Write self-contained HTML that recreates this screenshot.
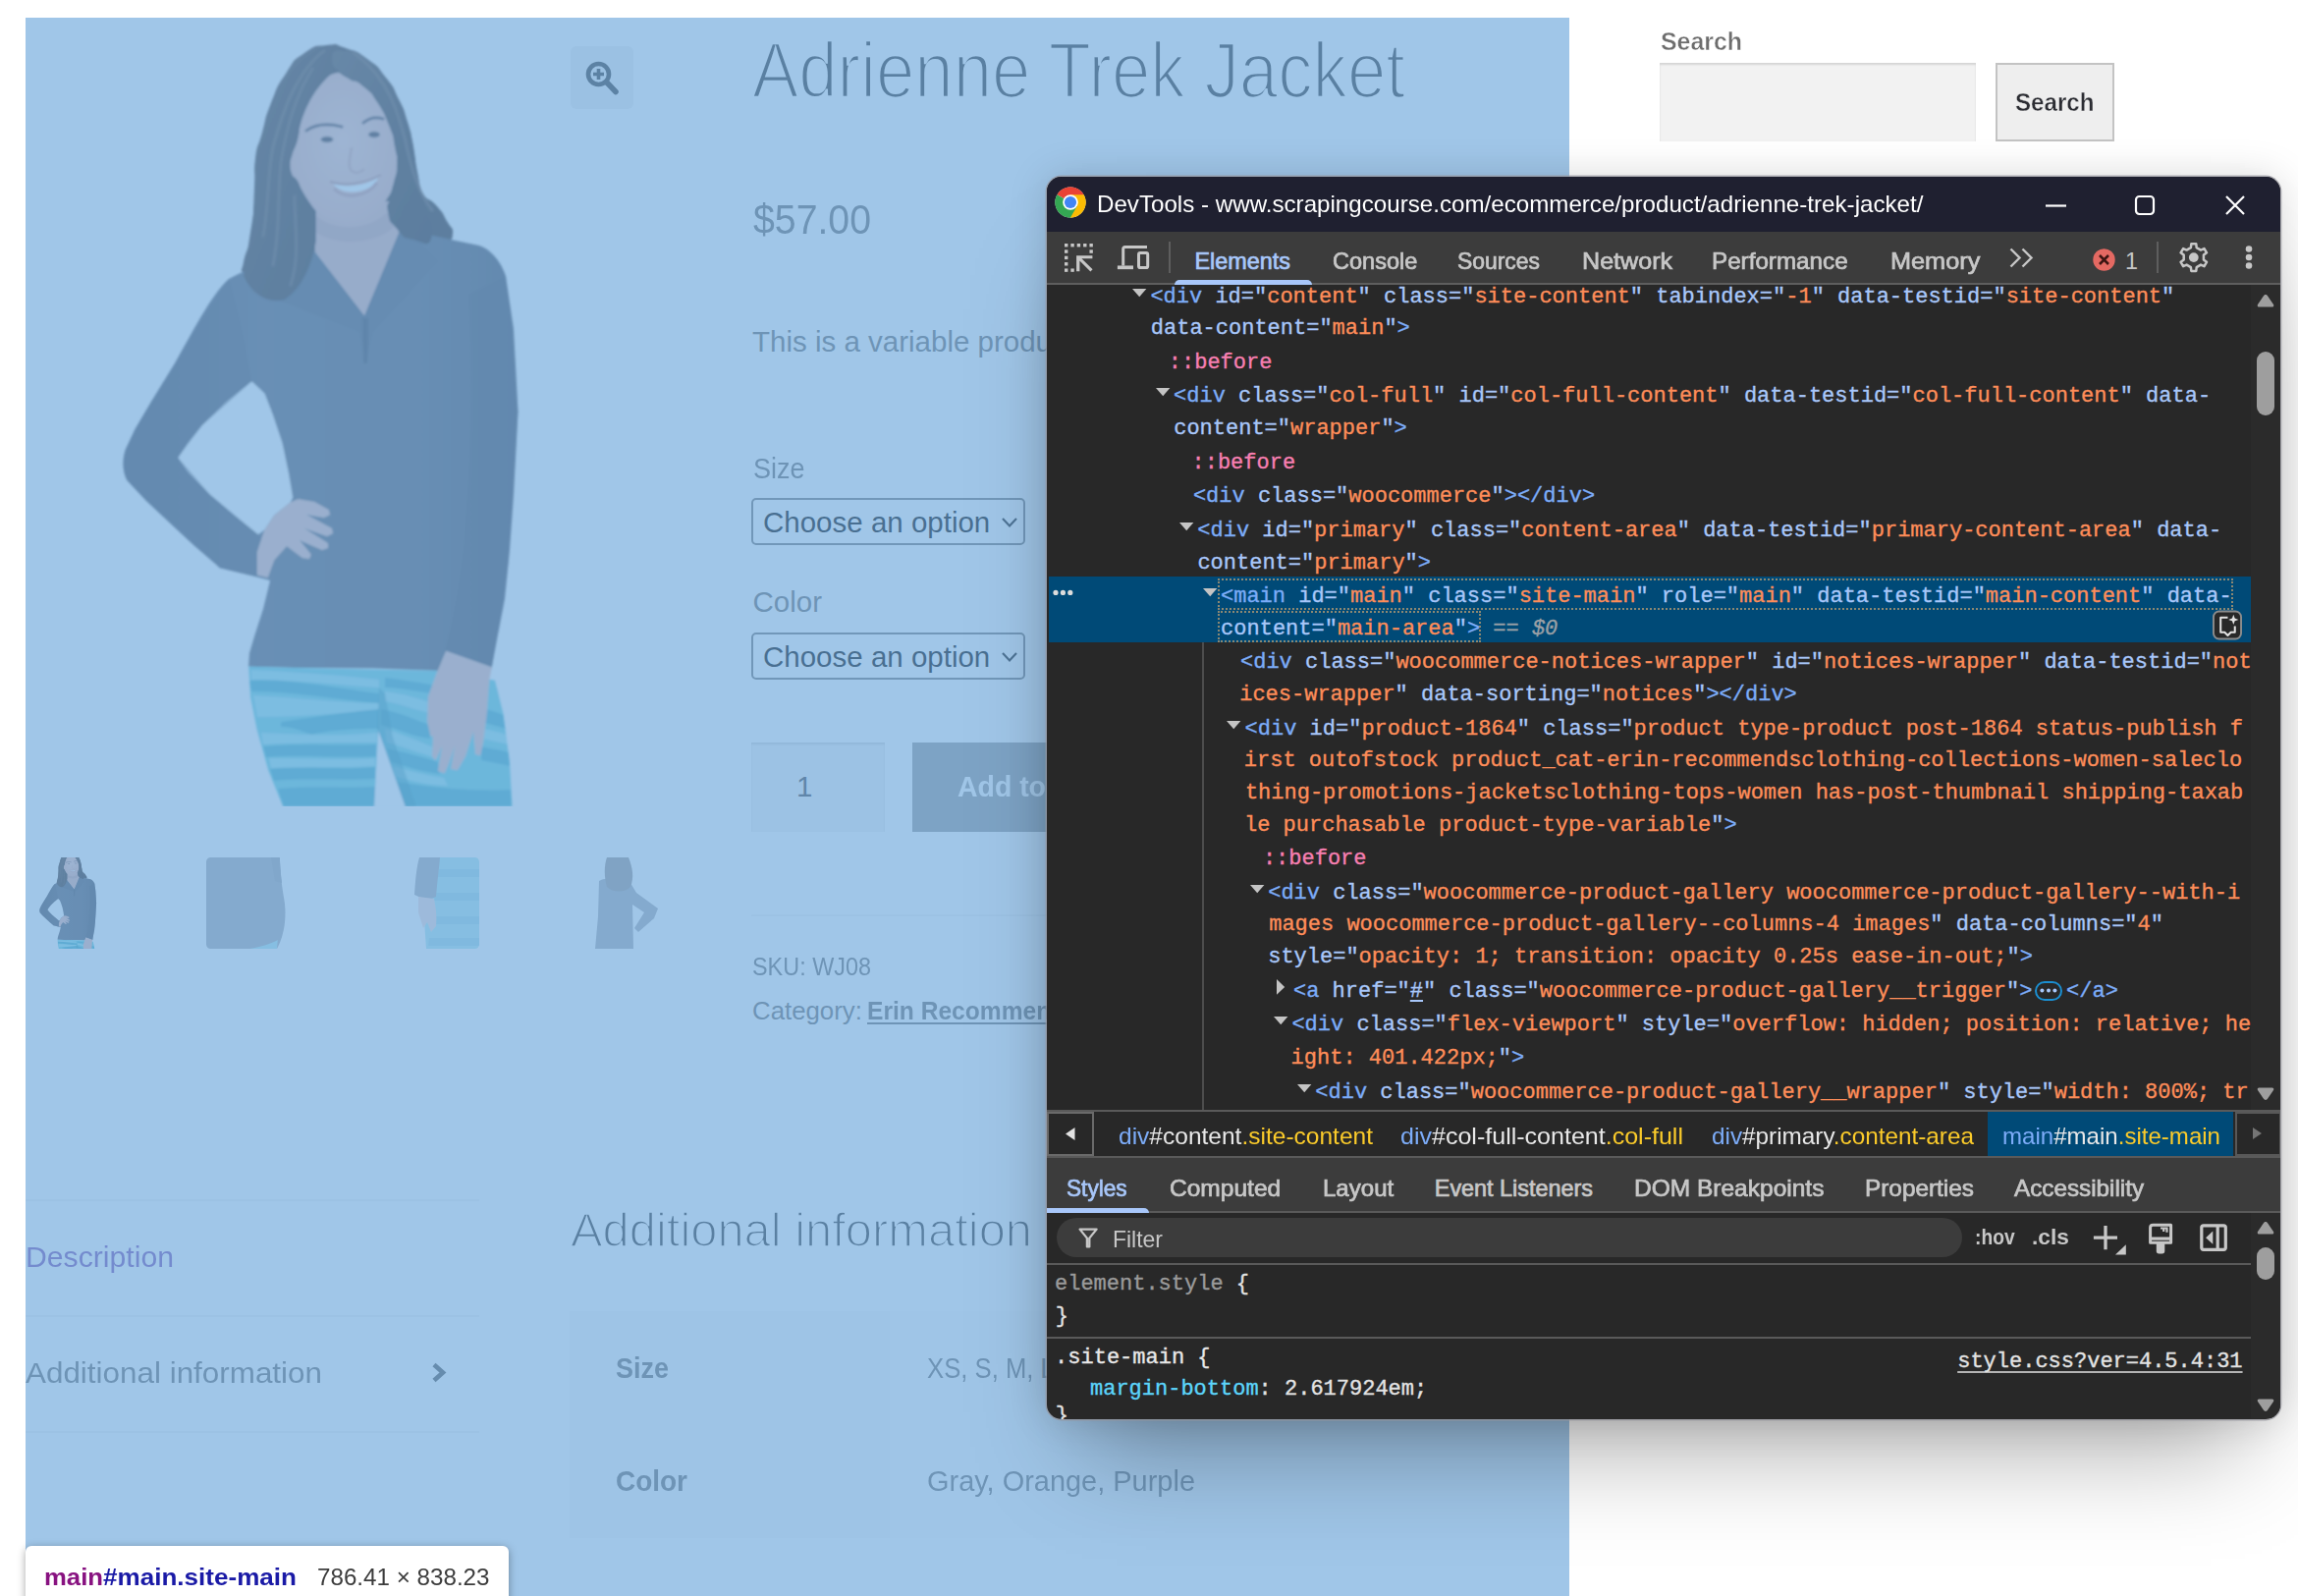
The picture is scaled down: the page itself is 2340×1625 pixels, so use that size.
<!DOCTYPE html>
<html lang="en"><head><meta charset="utf-8"><title>Adrienne Trek Jacket</title>
<style>
html,body{margin:0;padding:0}
body{width:2340px;height:1625px;position:relative;overflow:hidden;background:#fff;font-family:"Liberation Sans",Arial,sans-serif}
.t{position:absolute;white-space:pre;transform-origin:0 50%;display:block}
.a{position:absolute}
.m{position:absolute;white-space:pre;font:400 22px/30px "Liberation Mono",monospace;letter-spacing:-0.003px;-webkit-text-stroke:.35px}
.tg{color:#7cacf8}.an{color:#a8c7fa}.av{color:#fe8d59}.ps{color:#f77fb1}
svg{position:absolute;overflow:visible}
</style></head><body>
<div class="a" id="page" style="left:0;top:0;width:2340px;height:1625px"><svg style="left:26px;top:18px" width="647" height="803" viewBox="26 18 647 803"><defs><clipPath id="cpm"><rect x="26" y="18" width="647" height="803"/></clipPath></defs><g clip-path="url(#cpm)">
<g id="fig">
 <defs>
  <linearGradient id="gj" x1="0" y1="0" x2="1" y2="0"><stop offset="0" stop-color="#50515c"/><stop offset=".35" stop-color="#5e5f6a"/><stop offset=".75" stop-color="#5b5c67"/><stop offset="1" stop-color="#4d4e59"/></linearGradient>
  <linearGradient id="gh" x1="0" y1="0" x2="1" y2="1"><stop offset="0" stop-color="#5a4a44"/><stop offset=".5" stop-color="#453631"/><stop offset="1" stop-color="#372a28"/></linearGradient>
  <radialGradient id="gf" cx=".5" cy=".45" r=".6"><stop offset="0" stop-color="#f6cbc1"/><stop offset="1" stop-color="#e6b3a9"/></radialGradient>
  <filter id="soft" x="-5%" y="-5%" width="110%" height="110%"><feGaussianBlur stdDeviation="0.8"/></filter>
 </defs>
 <g filter="url(#soft)">
 <path d="M333.0,46.0 C319.0,47.7 324.0,44.3 310.0,54.0 C296.0,63.7 302.3,58.0 291.0,75.0 C279.7,92.0 284.0,85.0 276.0,105.0 C268.0,125.0 272.3,116.0 267.0,135.0 C261.7,154.0 262.3,143.7 260.0,162.0 C257.7,180.3 260.7,171.3 260.0,190.0 C259.3,208.7 259.3,201.3 258.0,218.0 C256.7,234.7 259.3,223.7 256.0,240.0 C252.7,256.3 250.7,253.3 248.0,267.0 C245.3,280.7 244.7,270.0 248.0,281.0 C251.3,292.0 249.3,291.0 258.0,300.0 C266.7,309.0 263.3,306.3 274.0,308.0 C284.7,309.7 279.7,310.3 290.0,305.0 C300.3,299.7 295.7,303.7 305.0,292.0 C314.3,280.3 312.3,285.7 318.0,270.0 C323.7,254.3 320.7,261.7 322.0,245.0 C323.3,228.3 296.0,230.0 322.0,220.0 C348.0,210.0 372.7,210.7 400.0,215.0 C427.3,219.3 397.3,223.3 404.0,233.0 C410.7,242.7 409.3,239.3 420.0,244.0 C430.7,248.7 425.0,246.3 436.0,247.0 C447.0,247.7 444.7,249.0 453.0,246.0 C461.3,243.0 460.3,245.0 461.0,238.0 C461.7,231.0 460.3,234.3 455.0,225.0 C449.7,215.7 453.7,220.0 445.0,210.0 C436.3,200.0 435.7,206.0 429.0,195.0 C422.3,184.0 427.7,192.0 425.0,177.0 C422.3,162.0 424.3,167.7 421.0,150.0 C417.7,132.3 420.0,140.3 415.0,124.0 C410.0,107.7 413.3,116.0 406.0,101.0 C398.7,86.0 403.7,92.7 393.0,79.0 C382.3,65.3 387.7,70.0 374.0,60.0 C360.3,50.0 365.7,53.7 352.0,49.0 C338.3,44.3 347.0,44.3 333.0,46.0 Z" fill="url(#gh)"/>
 <path d="M321.0,210.0 L321.0,256.0 L345.0,288.0 L370.5,320.0 L384.0,290.0 L406.0,237.0 L398.0,205.0 Z" fill="#e4b2a8"/>
 <path d="M300,262 C280,266 250,274 233,284 C215,300 195,340 178,370 L154,409 L137.5,437 L127.7,458 C124,470 125,480 129.3,489 L149,510 L173.3,532.7 L197.8,555.5 L220.6,575 L223.8,578.3 L271,589.7 L275,591.3 L268,620 L259,648 L254,665 L253,678.7 L300,680 L380,680.5 L447,683 L454.2,663 L500.7,679.6 L505.7,653 L514,609.8 L519,560 L523,504 L527.5,419 L523,335 L515,281 C510,266 500,254 488,250 L440,240 L406,226 L371,321 L319,254 Z" fill="url(#gj)"/>
 <path d="M256.4,388.5 L230.3,408.9 L205.9,433.3 L191.2,451.2 L181.5,465.9 L191.2,480.6 L214,503.4 L238.5,524.5 L262.9,544.1 L269.4,539.2 L279.2,524.5 L295.5,511.5 L298,506.6 L293.9,482.2 L287.4,451.2 L277.6,421.9 L269.4,400.7 Z" fill="#fff"/>
 <path d="M178,370 L154,409 L137.5,437 L127.7,458 C124,470 126,482 129.3,489 L149,510 L197.8,555.5 L223.8,578.3 L271,589.7 L272,560 L262.9,544.1 L214,503.4 L181.5,465.9 L205.9,433.3 L256.4,388.5 C250,350 240,310 233,284 Z" fill="#4d4e59" opacity=".5"/>
 <path d="M478,300 C484,400 482,560 452,667 L500.5,681.5 L517.5,574 L527.5,419 L515,281 Z" fill="#494a55" opacity=".5"/>
 <path d="M319,254 L371,321 L406,226 L414,232 L446,266 L380,338 L372,372 L366,338 L284,306 Z" fill="#52535e" opacity=".7"/>
 <path d="M321,215 L321,256 L371,321 L384,290 L406,237 L398,205 Z" fill="#e4b2a8"/>
 <path d="M322,220 C340,236 380,236 398,212 L400,232 C380,250 340,250 321,236 Z" fill="#c99a92" opacity=".6"/>
 <path d="M337.0,76.0 C324.7,80.0 327.7,78.7 318.0,92.0 C308.3,105.3 313.0,99.0 308.0,116.0 C303.0,133.0 307.0,128.3 303.0,143.0 C299.0,157.7 298.3,149.0 296.0,160.0 C293.7,171.0 293.7,168.0 296.0,176.0 C298.3,184.0 298.3,176.0 303.0,184.0 C307.7,192.0 303.7,190.0 310.0,200.0 C316.3,210.0 312.0,206.0 322.0,214.0 C332.0,222.0 326.7,220.0 340.0,224.0 C353.3,228.0 348.7,228.0 362.0,226.0 C375.3,224.0 369.7,225.3 380.0,218.0 C390.3,210.7 386.0,215.0 393.0,204.0 C400.0,193.0 397.3,198.0 401.0,185.0 C404.7,172.0 403.7,179.0 404.0,165.0 C404.3,151.0 405.3,158.0 402.0,143.0 C398.7,128.0 400.0,133.0 394.0,120.0 C388.0,107.0 391.3,114.0 384.0,104.0 C376.7,94.0 381.7,98.0 372.0,90.0 C362.3,82.0 366.7,84.7 355.0,80.0 C343.3,75.3 349.3,72.0 337.0,76.0 Z" fill="url(#gf)"/>
 <path d="M248,281 C256,300 274,310 290,305 C305,296 318,272 322,245 L322,215 C316,208 306,192 303,184 C296,180 294,168 297,160 C300,150 304,140 303,143 C306,118 318,92 337,76 C345,70 352,72 352,78 L352,49 L333,46 C310,54 291,75 276,105 L260,162 L258,218 Z" fill="url(#gh)"/>
 <path d="M352.0,78.0 C363.3,87.3 361.3,79.3 372.0,88.0 C382.7,96.7 376.0,90.7 384.0,104.0 C392.0,117.3 390.0,112.7 396.0,128.0 C402.0,143.3 399.3,135.0 402.0,150.0 C404.7,165.0 405.3,157.0 404.0,173.0 C402.7,189.0 401.0,183.7 398.0,198.0 C395.0,212.3 393.0,204.3 395.0,216.0 C397.0,227.7 395.7,223.7 404.0,233.0 C412.3,242.3 408.0,241.7 420.0,244.0 C432.0,246.3 436.7,254.7 440.0,240.0 C443.3,225.3 435.3,223.3 430.0,200.0 C424.7,176.7 428.7,193.3 424.0,170.0 C419.3,146.7 424.0,156.0 416.0,130.0 C408.0,104.0 413.3,114.0 400.0,92.0 C386.7,70.0 392.0,77.3 376.0,64.0 C360.0,50.7 364.7,53.3 352.0,52.0 C339.3,50.7 338.0,51.3 338.0,60.0 C338.0,68.7 340.7,68.7 352.0,78.0 Z" fill="url(#gh)"/>
 <g fill="none" stroke="#7a6458" stroke-width="3" opacity=".55" stroke-linecap="round">
  <path d="M330,52 C305,70 288,110 278,150 C272,180 274,210 268,240"/>
  <path d="M318,70 C300,100 292,130 286,165 C282,200 286,230 278,270"/>
  <path d="M360,54 C385,70 402,100 412,140 C418,170 426,196 440,214"/>
  <path d="M300,200 C300,230 306,260 296,290"/>
 </g>
 <path d="M339,187 C352,192 372,189 385,181 C380,196 350,201 339,187 Z" fill="#fff"/>
 <path d="M336,185 C350,190 372,187 388,178" stroke="#c58a84" stroke-width="2" fill="none"/>
 <path d="M340,192 C352,204 374,200 384,186" stroke="#d39a94" stroke-width="3.5" fill="none"/>
 <path d="M312,133 C322,126 336,126 348,129 M370,125 C377,119 384,119 390,121" stroke="#5a4448" stroke-width="3.2" fill="none" stroke-linecap="round"/>
 <ellipse cx="333" cy="142" rx="6.5" ry="3.2" fill="#4a3638"/><ellipse cx="381" cy="137" rx="6" ry="3.2" fill="#4a3638"/>
 <path d="M358,150 C356,162 354,170 358,174 C362,177 368,176 371,172" stroke="#d8a59c" stroke-width="2.5" fill="none"/>
 <path d="M253.3,678.7 L300,680 L447,683 L504,692.8 L512.3,726 L519,776 L521.5,821.2 L288.2,821.2 L273.2,784.2 L261.6,742.7 L255,709.5 Z" fill="#68d2da"/>
 <clipPath id="cpleg"><path d="M253.3,678.7 L300,680 L447,683 L504,692.8 L512.3,726 L519,776 L521.5,821.2 L288.2,821.2 L273.2,784.2 L261.6,742.7 L255,709.5 Z"/></clipPath>
 <g clip-path="url(#cpleg)">
 <g fill="#279cb6" opacity=".62">
  <path d="M254,693 C290,690 340,700 386,706 L386,716 C340,712 300,704 256,704 Z"/>
  <path d="M286,735 C320,730 360,724 386,722 L386,742 C360,742 330,744 318,748 C306,744 296,740 286,740 Z"/>
  <path d="M268,760 C300,756 350,760 383,758 L383,770 C350,772 300,768 271,771 Z"/>
  <path d="M275,783 C310,780 350,784 382,781 L382,793 C350,795 310,792 279,795 Z"/>
  <path d="M283,803 C320,800 350,803 382,801 L382,822 L289,822 Z"/>
  <path d="M392,690 C410,692 430,696 447,698 L447,706 C430,706 410,700 392,700 Z"/>
  <path d="M388,722 C410,726 425,734 438,738 L438,752 C420,750 405,742 388,738 Z"/>
  <path d="M394,762 C410,766 430,770 446,776 L448,788 C430,786 412,780 398,776 Z"/>
  <path d="M404,796 C430,800 470,806 520,804 L521,822 L412,822 Z"/>
  <path d="M494,722 C502,724 508,726 513,728 L515,742 C508,740 500,738 494,736 Z"/>
  <path d="M490,760 C500,762 510,764 518,766 L519,780 C510,778 500,776 490,774 Z"/>
 </g>
 <g fill="#c4f4fa" opacity=".5">
  <path d="M256,682 C300,684 350,688 386,692 L386,700 C350,698 300,692 256,692 Z"/>
  <path d="M258,708 C300,710 350,716 386,716 L386,722 C350,726 310,730 262,730 Z"/>
  <path d="M266,746 C300,748 350,750 384,746 L384,756 C350,756 300,756 268,758 Z"/>
  <path d="M274,772 C310,772 350,774 382,772 L382,780 C350,782 310,780 276,782 Z"/>
  <path d="M392,704 C410,706 430,712 440,716 L438,726 C420,722 405,716 392,714 Z"/>
  <path d="M392,742 C410,748 430,756 444,762 L446,772 C430,768 410,760 394,756 Z"/>
  <path d="M400,780 C420,786 440,790 452,792 L456,800 C440,800 420,796 402,790 Z"/>
  <path d="M492,742 C502,744 510,746 516,748 L517,758 C510,756 500,754 491,752 Z"/>
 </g>
 </g>
 <path d="M386,700 L384,744 L390,770 L412.7,821.2 L424,821.2 L400,750 L392,706 Z" fill="#2a8fa4" opacity=".45"/>
 <path d="M385.3,744.3 L381.2,821.5 L412.7,821.5 Z" fill="#fff"/>
 <path d="M454.2,663 L500.7,679.6 L498.2,692.8 L495.7,726 L492,756 L489.1,769.2 L484,768 L482,745 L474,770 L465.8,784.2 L459,783 L463,760 L456,780 L452.6,787.5 L446,785 L450,760 L443.4,774.2 L440,770 L441,750 L438.4,749.3 L435.1,734.4 L436,709.5 L444.3,686.2 Z" fill="#ecbdb3"/>
 <path d="M269.4,539.2 L279.2,524.5 L295.5,511.5 L303.7,508.3 L320,511 L334.6,519 L336,524 L330,527 L312,524 L337.9,538 L339,543 L333,546 L310,538 L333.8,553 L334,558 L328,560 L305,550 L316.7,564.5 L315,569 L308,568 L292,556 L279.2,570.2 L272.7,588 L262,585.5 L262,562 Z" fill="#ecbdb3"/>
 <path d="M369,324 L375,324 L374,370 L370,370 Z" fill="#42434d"/>
 </g>
</g></g></svg><div class="a" style="left:581px;top:47px;width:64px;height:64px;border-radius:6px;background:#f0f0f0"></div><svg style="left:596px;top:62px" width="34" height="36" viewBox="0 0 34 36"><circle cx="13.5" cy="13.5" r="10.5" fill="none" stroke="#3a3a3a" stroke-width="4.6"/><path d="M21.5,21.5 L31,31.5" stroke="#3a3a3a" stroke-width="5.6" stroke-linecap="round"/><path d="M8,13.5 H19 M13.5,8 V19" stroke="#3a3a3a" stroke-width="3.6"/></svg><svg style="left:26px;top:873px" width="93" height="93" viewBox="26 96 647 647"><defs><clipPath id="cpt1"><rect x="26" y="96" width="647" height="647"/></clipPath></defs><g clip-path="url(#cpt1)"><use href="#fig"/></g></svg><svg style="left:210px;top:873px;opacity:.5" width="93" height="93" viewBox="0 0 93 93">
<path d="M4.5,0 H74.8 C75.5,14 76.5,26 78.5,38 C80.5,48 81,56 80,66 C79,76 76,86 72,93 H4.5 C2,93 0,91 0,88.5 V4.5 C0,2 2,0 4.5,0 Z" fill="#5b5c67"/>
<path d="M66,0 H74.8 C75.3,10 76,18 77,26 L70,24 Z" fill="#494a55"/>
<path d="M44,93 C56,91 66,88 72.8,84 L72,93 Z" fill="#68d2da"/></svg><svg style="left:395px;top:873px;opacity:.5" width="93" height="93" viewBox="0 0 93 93">
<path d="M48,0 H88.5 C91,0 93,2 93,4.5 V88.5 C93,91 91,93 88.5,93 H39 L36,50 Z" fill="#68d2da"/>
<g fill="#279cb6" opacity=".5"><path d="M52,12 H93 V20 H50 Z M48,36 H93 V44 H47 Z M46,60 H93 V68 H44 Z M42,82 H93 V90 H41 Z"/></g>
<path d="M32,0 H53 C52,12 50,26 49,40 L40,44 L27,38 C28,24 29,10 32,0 Z" fill="#5b5c67"/>
<path d="M31,40 L47,42 C49,52 50,60 49,70 L44,76 L40,66 L36,72 L31,56 Z" fill="#ecbdb3"/></svg><svg style="left:580px;top:873px;opacity:.5" width="93" height="93" viewBox="0 0 93 93">
<path d="M30,24 C36,20 56,20 62,26 L68,36 L90,52 L86,62 L70,76 L66,72 L76,56 L64,48 L65,93 H26 L29,60 Z" fill="#5b5c67"/>
<path d="M38,0 H60 C64,10 66,20 62,30 C56,36 44,36 38,30 C35,20 35,8 38,0 Z" fill="#453631"/></svg><span class="t" style="transform:scaleX(0.8905);left:766.0px;top:20.2px;font:400 79.5px/103px 'Liberation Sans', Arial, sans-serif;color:#333;-webkit-text-stroke:2.7px #fff;">Adrienne Trek Jacket</span><span class="t" style="transform:scaleX(0.9341);left:767.0px;top:195.9px;font:400 42px/55px 'Liberation Sans', Arial, sans-serif;color:#6d6d6d;">$57.00</span><span class="t" style="left:766.0px;top:328.8px;font:400 29.5px/38px 'Liberation Sans', Arial, sans-serif;color:#6d6d6d;">This is a variable product called a Adrienne Trek Jacket</span><span class="t" style="transform:scaleX(0.9148);left:766.5px;top:457.5px;font:400 29.5px/38px 'Liberation Sans', Arial, sans-serif;color:#6d6d6d;">Size</span><span class="t" style="left:766.5px;top:593.8px;font:400 29.5px/38px 'Liberation Sans', Arial, sans-serif;color:#6d6d6d;">Color</span><div class="a" style="left:765px;top:507px;width:275px;height:43.5px;border:2px solid #767676;border-radius:5px;background:#fff"></div><span class="t" style="left:777.0px;top:512.6px;font:400 29.5px/38px 'Liberation Sans', Arial, sans-serif;color:#000;">Choose an option</span><svg style="left:1020px;top:526.5px" width="16" height="10" viewBox="0 0 16 10"><path d="M1,1 L8,8.4 L15,1" fill="none" stroke="#111" stroke-width="2.2"/></svg><div class="a" style="left:765px;top:644px;width:275px;height:43.5px;border:2px solid #767676;border-radius:5px;background:#fff"></div><span class="t" style="left:777.0px;top:649.6px;font:400 29.5px/38px 'Liberation Sans', Arial, sans-serif;color:#000;">Choose an option</span><svg style="left:1020px;top:663.5px" width="16" height="10" viewBox="0 0 16 10"><path d="M1,1 L8,8.4 L15,1" fill="none" stroke="#111" stroke-width="2.2"/></svg><div class="a" style="left:765px;top:756px;width:136px;height:91px;background:#f2f2f2;box-shadow:inset 0 2px 2px rgba(0,0,0,.12)"></div><span class="t" style="left:811.0px;top:782.2px;font:400 29.5px/38px 'Liberation Sans', Arial, sans-serif;color:#43454b;">1</span><div class="a" style="left:929px;top:756px;width:300px;height:91px;background:#999"></div><span class="t" style="transform:scaleX(0.9634);left:974.5px;top:782.2px;font:700 29.5px/38px 'Liberation Sans', Arial, sans-serif;color:#fff;">Add to cart</span><div class="a" style="left:765px;top:931px;width:834px;height:2px;background:rgba(0,0,0,.05)"></div><span class="t" style="transform:scaleX(0.9075);left:766.0px;top:967.1px;font:400 25.8px/34px 'Liberation Sans', Arial, sans-serif;color:#6d6d6d;">SKU: WJ08</span><span class="t" style="left:766.0px;top:1011.9px;font:400 25.8px/34px 'Liberation Sans', Arial, sans-serif;color:#6d6d6d;">Category: </span><span class="t" style="transform:scaleX(0.9536);left:883.0px;top:1011.9px;font:700 25.8px/34px 'Liberation Sans', Arial, sans-serif;color:#6d6d6d;text-decoration:underline;text-decoration-thickness:2px;text-underline-offset:3px;">Erin Recommends</span><div class="a" style="left:26px;top:1221px;width:462px;height:2px;background:rgba(0,0,0,.05)"></div><div class="a" style="left:26px;top:1339px;width:462px;height:2px;background:rgba(0,0,0,.05)"></div><div class="a" style="left:26px;top:1457px;width:462px;height:2px;background:rgba(0,0,0,.05)"></div><span class="t" style="transform:scaleX(1.0233);left:26.0px;top:1260.8px;font:400 29.5px/38px 'Liberation Sans', Arial, sans-serif;color:#7f54b3;">Description</span><span class="t" style="transform:scaleX(1.0645);left:26.0px;top:1378.8px;font:400 29.5px/38px 'Liberation Sans', Arial, sans-serif;color:#6d6d6d;">Additional information</span><svg style="left:439px;top:1387px" width="17" height="21" viewBox="0 0 17 21"><path d="M3,2.5 L12,10.5 L3,18.5" fill="none" stroke="#555" stroke-width="4.6"/></svg><span class="t" style="transform:scaleX(1.0077);left:581.0px;top:1220.9px;font:400 48.5px/63px 'Liberation Sans', Arial, sans-serif;color:#333;-webkit-text-stroke:1.7px #fff;">Additional information</span><div class="a" style="left:580px;top:1335px;width:326px;height:231px;background:#f8f8f8"></div><div class="a" style="left:906px;top:1335px;width:692px;height:231px;background:#fdfdfd"></div><span class="t" style="transform:scaleX(0.9148);left:627.0px;top:1373.8px;font:700 29.5px/38px 'Liberation Sans', Arial, sans-serif;color:#6d6d6d;">Size</span><span class="t" style="transform:scaleX(0.9477);left:627.0px;top:1488.8px;font:700 29.5px/38px 'Liberation Sans', Arial, sans-serif;color:#6d6d6d;">Color</span><span class="t" style="transform:scaleX(0.8706);left:943.5px;top:1373.8px;font:400 29.5px/38px 'Liberation Sans', Arial, sans-serif;color:#6d6d6d;">XS, S, M, </span><span class="t" style="left:1059.0px;top:1373.8px;font:400 29.5px/38px 'Liberation Sans', Arial, sans-serif;color:#6d6d6d;">L, XL</span><span class="t" style="transform:scaleX(0.9813);left:943.5px;top:1488.8px;font:400 29.5px/38px 'Liberation Sans', Arial, sans-serif;color:#6d6d6d;">Gray, Orange, Purple</span><span class="t" style="transform:scaleX(0.9569);left:1691.0px;top:25.2px;font:700 26px/34px 'Liberation Sans', Arial, sans-serif;color:#6d6d6d;-webkit-text-stroke:.4px #fff;">Search</span><div class="a" style="left:1690px;top:64px;width:322px;height:80px;background:#f2f2f2;box-shadow:inset 0 2px 2px rgba(0,0,0,.12)"></div><div class="a" style="left:2032px;top:64px;width:117px;height:76px;background:#eeeeee;border:2px solid #c3c3c3"></div><span class="t" style="transform:scaleX(0.9281);left:2052.0px;top:86.8px;font:700 26px/34px 'Liberation Sans', Arial, sans-serif;color:#2c2d33;-webkit-text-stroke:.4px #eee;">Search</span></div><div class="a" style="left:26px;top:18px;width:1572px;height:1607px;background:rgba(111,168,220,.66)"></div><div class="a" style="left:26px;top:1574px;width:492px;height:70px;background:#fff;border-radius:6px;box-shadow:0 2px 8px rgba(0,0,0,.35)"></div><span class="t" style="transform:scaleX(1.0894);left:44.5px;top:1590.6px;font:700 23.6px/31px 'Liberation Sans', Arial, sans-serif;color:#881280;">main</span><span class="t" style="transform:scaleX(1.1047);left:104.8px;top:1590.6px;font:700 23.6px/31px 'Liberation Sans', Arial, sans-serif;color:#1a1aa6;">#main.site-main</span><span class="t" style="transform:scaleX(1.0250);left:323.0px;top:1590.6px;font:400 23.6px/31px 'Liberation Sans', Arial, sans-serif;color:#3c3c3c;">786.41 × 838.23</span><div class="a" style="left:1066px;top:180px;width:1256px;height:1265px;border-radius:15px;background:#282828;box-shadow:0 0 0 1.4px rgba(150,150,158,.75),0 64px 100px -36px rgba(0,0,0,.34),0 0 40px rgba(0,0,0,.15)"></div><div class="a" style="left:1066px;top:180px;width:1256px;height:1265px;border-radius:15px;overflow:hidden"><div class="a" style="left:-1066px;top:-180px;width:2340px;height:1625px"><div class="a" style="left:1066px;top:180px;width:1256px;height:56px;background:#1f2030"></div><svg style="left:1073px;top:189px" width="34" height="34" viewBox="0 0 48 48">
<circle cx="24" cy="24" r="22" fill="#fff"/>
<path d="M24,24 L4.95,13 A22,22 0 0 1 43.05,13 Z" fill="#ea4335"/>
<path d="M24,24 L43.05,13 A22,22 0 0 1 24,46 Z" fill="#fbbc04"/>
<path d="M24,24 L24,46 A22,22 0 0 1 4.95,13 Z" fill="#34a853"/>
<path d="M24,13 H43.05 A22,22 0 0 0 4.95,13 Z" fill="#ea4335"/>
<path d="M33.5,29.5 L24,46 A22,22 0 0 0 43.05,13 H24 Z" fill="#fbbc04"/>
<path d="M14.5,29.5 L4.95,13 A22,22 0 0 0 24,46 L33.5,29.5 Z" fill="#34a853"/>
<circle cx="24" cy="24" r="11" fill="#fff"/><circle cx="24" cy="24" r="8.6" fill="#4285f4"/></svg><span class="t" style="transform:scaleX(1.0323);left:1117.0px;top:192.9px;font:400 23.4px/30px 'Liberation Sans', Arial, sans-serif;color:#fff;">DevTools - www.scrapingcourse.com/ecommerce/product/adrienne-trek-jacket/</span><svg style="left:2083px;top:208px" width="21" height="3" viewBox="0 0 21 3"><rect width="21" height="2.2" y=".4" fill="#fff"/></svg><svg style="left:2173px;top:198px" width="22" height="22" viewBox="0 0 22 22"><rect x="2" y="2" width="18" height="18" rx="3.5" fill="none" stroke="#fff" stroke-width="2.2"/></svg><svg style="left:2265px;top:198px" width="22" height="22" viewBox="0 0 22 22"><path d="M2,2 L20,20 M20,2 L2,20" stroke="#fff" stroke-width="2.2" fill="none"/></svg><div class="a" style="left:1066px;top:236px;width:1256px;height:52px;background:#3c3c3c"></div><div class="a" style="left:1066px;top:288px;width:1256px;height:2px;background:#5e5e5e"></div><svg style="left:1083.8px;top:247.9px" width="30" height="30" viewBox="0 0 30 30"><g fill="#c7c7c7"><rect x="0.00" y="0.00" width="3.4" height="3.4"/><rect x="6.36" y="0.00" width="3.4" height="3.4"/><rect x="12.72" y="0.00" width="3.4" height="3.4"/><rect x="19.08" y="0.00" width="3.4" height="3.4"/><rect x="25.44" y="0.00" width="3.4" height="3.4"/><rect x="0.00" y="6.36" width="3.4" height="3.4"/><rect x="0.00" y="12.72" width="3.4" height="3.4"/><rect x="0.00" y="19.08" width="3.4" height="3.4"/><rect x="0.00" y="25.44" width="3.4" height="3.4"/><rect x="25.44" y="6.36" width="3.4" height="3.4"/><rect x="6.36" y="25.44" width="3.4" height="3.4"/><path d="M12.1,12.2 H28.4 V15.3 H17.4 L28.6,26.2 L26.4,28.4 L15.4,17.6 V28.3 H12.1 Z"/></g></svg><svg style="left:1137px;top:249px" width="35" height="27" viewBox="0 0 35 27"><g fill="none" stroke="#c7c7c7"><path d="M6.7,21.6 V4.5 Q6.7,2.5 8.7,2.5 H31" stroke-width="3"/><path d="M0.9,23.3 H17" stroke-width="3.7"/><rect x="22.5" y="8.6" width="9.2" height="15" rx="1.6" stroke-width="3"/></g></svg><div class="a" style="left:1190px;top:246px;width:2px;height:32px;background:#5e5e5e"></div><span class="t" style="left:1216.5px;top:251.3px;font:400 23.4px/30px 'Liberation Sans', Arial, sans-serif;color:#a8c7fa;-webkit-text-stroke:.7px #a8c7fa;">Elements</span><span class="t" style="transform:scaleX(1.0055);left:1356.7px;top:251.3px;font:400 23.4px/30px 'Liberation Sans', Arial, sans-serif;color:#c7c7c7;-webkit-text-stroke:.7px #c7c7c7;">Console</span><span class="t" style="transform:scaleX(0.9789);left:1484.0px;top:251.3px;font:400 23.4px/30px 'Liberation Sans', Arial, sans-serif;color:#c7c7c7;-webkit-text-stroke:.7px #c7c7c7;">Sources</span><span class="t" style="transform:scaleX(1.0735);left:1610.5px;top:251.3px;font:400 23.4px/30px 'Liberation Sans', Arial, sans-serif;color:#c7c7c7;-webkit-text-stroke:.7px #c7c7c7;">Network</span><span class="t" style="transform:scaleX(1.0351);left:1743.4px;top:251.3px;font:400 23.4px/30px 'Liberation Sans', Arial, sans-serif;color:#c7c7c7;-webkit-text-stroke:.7px #c7c7c7;">Performance</span><span class="t" style="transform:scaleX(1.0807);left:1925.0px;top:251.3px;font:400 23.4px/30px 'Liberation Sans', Arial, sans-serif;color:#c7c7c7;-webkit-text-stroke:.7px #c7c7c7;">Memory</span><div class="a" style="left:1195.7px;top:285.2px;width:140.3px;height:5px;border-radius:5px 5px 0 0;background:#a8c7fa"></div><svg style="left:2046px;top:252px" width="26" height="21" viewBox="0 0 26 21"><path d="M1.5,1.5 L10.5,10.5 L1.5,19.5 M13.5,1.5 L22.5,10.5 L13.5,19.5" fill="none" stroke="#c7c7c7" stroke-width="2.4"/></svg><svg style="left:2131px;top:252.5px" width="23" height="23" viewBox="0 0 23 23"><circle cx="11.5" cy="11.5" r="11.2" fill="#e46962"/><path d="M7,7 L16,16 M16,7 L7,16" stroke="#3c1512" stroke-width="2.6"/></svg><span class="t" style="left:2164.0px;top:250.7px;font:400 23.4px/30px 'Liberation Sans', Arial, sans-serif;color:#c7c7c7;">1</span><div class="a" style="left:2196px;top:246px;width:2px;height:32px;background:#5e5e5e"></div><svg style="left:2218px;top:246px" width="32" height="32" viewBox="0 0 32 32"><path d="M12.90,6.11 L13.32,2.32 L18.28,2.32 L18.70,6.11 L23.00,8.59 L26.49,7.06 L28.97,11.36 L25.90,13.62 L25.90,18.58 L28.97,20.84 L26.49,25.14 L23.00,23.61 L18.70,26.09 L18.28,29.88 L13.32,29.88 L12.90,26.09 L8.60,23.61 L5.11,25.14 L2.63,20.84 L5.70,18.58 L5.70,13.62 L2.63,11.36 L5.11,7.06 L8.60,8.59 Z" fill="none" stroke="#c7c7c7" stroke-width="2.5" stroke-linejoin="round"/><circle cx="15.8" cy="16.1" r="4.9" fill="#c7c7c7"/></svg><svg style="left:2285px;top:249px" width="10" height="27" viewBox="0 0 10 27"><g fill="#c7c7c7"><circle cx="5" cy="4.5" r="3.3"/><circle cx="5" cy="13" r="3.3"/><circle cx="5" cy="21.5" r="3.3"/></g></svg><div class="a" style="left:2292px;top:290px;width:30px;height:840px;background:#2b2b2b"></div><div class="a" style="left:1068px;top:587px;width:1224px;height:67px;background:#004a77"></div><div class="a" style="left:1223.5px;top:654px;width:2px;height:476px;background:#4d4d4d"></div><div class="m" style="left:1171.4px;top:288.2px;"><span class="tg">&lt;div</span> <span class="an">id</span><span class="an">="</span><span class="av">content</span><span class="an">"</span> <span class="an">class</span><span class="an">="</span><span class="av">site-content</span><span class="an">"</span> <span class="an">tabindex</span><span class="an">="</span><span class="av">-1</span><span class="an">"</span> <span class="an">data-testid</span><span class="an">="</span><span class="av">site-content</span><span class="an">"</span></div><svg style="left:1152.9px;top:294.3px" width="14.4" height="8.2" viewBox="0 0 14.4 8.2"><path d="M0,0 H14.4 L7.2,8.2 Z" fill="#c4c4c4"/></svg><div class="m" style="left:1171.8px;top:320.3px;"><span class="an">data-content="</span><span class="av">main</span><span class="an">"</span><span class="tg">&gt;</span></div><div class="m" style="left:1189.8px;top:355.3px;"><span class="ps">::before</span></div><div class="m" style="left:1195.1px;top:389.0px;"><span class="tg">&lt;div</span> <span class="an">class</span><span class="an">="</span><span class="av">col-full</span><span class="an">"</span> <span class="an">id</span><span class="an">="</span><span class="av">col-full-content</span><span class="an">"</span> <span class="an">data-testid</span><span class="an">="</span><span class="av">col-full-content</span><span class="an">"</span> <span class="an">data-</span></div><svg style="left:1176.6px;top:395.1px" width="14.4" height="8.2" viewBox="0 0 14.4 8.2"><path d="M0,0 H14.4 L7.2,8.2 Z" fill="#c4c4c4"/></svg><div class="m" style="left:1195.2px;top:421.8px;"><span class="an">content="</span><span class="av">wrapper</span><span class="an">"</span><span class="tg">&gt;</span></div><div class="m" style="left:1213.5px;top:457.1px;"><span class="ps">::before</span></div><div class="m" style="left:1214.9px;top:491.3px;"><span class="tg">&lt;div</span> <span class="an">class</span><span class="an">="</span><span class="av">woocommerce</span><span class="an">"</span><span class="tg">&gt;&lt;/div&gt;</span></div><div class="m" style="left:1219.3px;top:525.8px;"><span class="tg">&lt;div</span> <span class="an">id</span><span class="an">="</span><span class="av">primary</span><span class="an">"</span> <span class="an">class</span><span class="an">="</span><span class="av">content-area</span><span class="an">"</span> <span class="an">data-testid</span><span class="an">="</span><span class="av">primary-content-area</span><span class="an">"</span> <span class="an">data-</span></div><svg style="left:1200.8px;top:531.9px" width="14.4" height="8.2" viewBox="0 0 14.4 8.2"><path d="M0,0 H14.4 L7.2,8.2 Z" fill="#c4c4c4"/></svg><div class="m" style="left:1219.4px;top:558.8px;"><span class="an">content="</span><span class="av">primary</span><span class="an">"</span><span class="tg">&gt;</span></div><div class="m" style="left:1243.0px;top:592.8px;"><span class="tg">&lt;main</span> <span class="an">id</span><span class="an">="</span><span class="av">main</span><span class="an">"</span> <span class="an">class</span><span class="an">="</span><span class="av">site-main</span><span class="an">"</span> <span class="an">role</span><span class="an">="</span><span class="av">main</span><span class="an">"</span> <span class="an">data-testid</span><span class="an">="</span><span class="av">main-content</span><span class="an">"</span> <span class="an">data-</span></div><svg style="left:1224.5px;top:598.9px" width="14.4" height="8.2" viewBox="0 0 14.4 8.2"><path d="M0,0 H14.4 L7.2,8.2 Z" fill="#c4c4c4"/></svg><div class="m" style="left:1243.1px;top:625.8px;"><span class="an">content="</span><span class="av">main-area</span><span class="an">"</span><span class="tg">&gt;</span><span style="color:#9aa0a6;font-style:italic"> == $0</span></div><div class="m" style="left:1263.0px;top:660.3px;"><span class="tg">&lt;div</span> <span class="an">class</span><span class="an">="</span><span class="av">woocommerce-notices-wrapper</span><span class="an">"</span> <span class="an">id</span><span class="an">="</span><span class="av">notices-wrapper</span><span class="an">"</span> <span class="an">data-testid</span><span class="an">="</span><span class="av">not</span></div><div class="m" style="left:1262.2px;top:693.2px;"><span class="av">ices-wrapper</span><span class="an">"</span> <span class="an">data-sorting</span><span class="an">="</span><span class="av">notices</span><span class="an">"</span><span class="tg">&gt;&lt;/div&gt;</span></div><div class="m" style="left:1267.6px;top:727.8px;"><span class="tg">&lt;div</span> <span class="an">id</span><span class="an">="</span><span class="av">product-1864</span><span class="an">"</span> <span class="an">class</span><span class="an">="</span><span class="av">product type-product post-1864 status-publish f</span></div><svg style="left:1249.1px;top:733.9px" width="14.4" height="8.2" viewBox="0 0 14.4 8.2"><path d="M0,0 H14.4 L7.2,8.2 Z" fill="#c4c4c4"/></svg><div class="m" style="left:1266.8px;top:760.3px;"><span class="av">irst outofstock product_cat-erin-recommendsclothing-collections-women-saleclo</span></div><div class="m" style="left:1267.9px;top:793.2px;"><span class="av">thing-promotions-jacketsclothing-tops-women has-post-thumbnail shipping-taxab</span></div><div class="m" style="left:1267.0px;top:825.5px;"><span class="av">le purchasable product-type-variable</span><span class="an">"</span><span class="tg">&gt;</span></div><div class="m" style="left:1285.9px;top:860.3px;"><span class="ps">::before</span></div><div class="m" style="left:1291.2px;top:895.0px;"><span class="tg">&lt;div</span> <span class="an">class</span><span class="an">="</span><span class="av">woocommerce-product-gallery woocommerce-product-gallery--with-i</span></div><svg style="left:1272.7px;top:901.1px" width="14.4" height="8.2" viewBox="0 0 14.4 8.2"><path d="M0,0 H14.4 L7.2,8.2 Z" fill="#c4c4c4"/></svg><div class="m" style="left:1292.2px;top:927.4px;"><span class="av">mages woocommerce-product-gallery--columns-4 images</span><span class="an">"</span> <span class="an">data-columns</span><span class="an">="</span><span class="av">4</span><span class="an">"</span></div><div class="m" style="left:1291.2px;top:959.8px;"><span class="an">style="</span><span class="av">opacity: 1; transition: opacity 0.25s ease-in-out;</span><span class="an">"</span><span class="tg">&gt;</span></div><div class="m" style="left:1317.0px;top:994.5px;"><span class="tg">&lt;a</span> <span class="an">href="</span><span class="an" style="text-decoration:underline;text-decoration-thickness:1.6px;text-underline-offset:3px">#</span><span class="an">"</span> <span class="an">class</span><span class="an">="</span><span class="av">woocommerce-product-gallery__trigger</span><span class="an">"</span><span class="tg">&gt;</span></div><svg style="left:1299.8px;top:996.8px" width="8.2" height="15.8" viewBox="0 0 8.2 15.8"><path d="M0,0 V15.8 L8.2,7.9 Z" fill="#c4c4c4"/></svg><div class="m" style="left:1315.4px;top:1029.2px;"><span class="tg">&lt;div</span> <span class="an">class</span><span class="an">="</span><span class="av">flex-viewport</span><span class="an">"</span> <span class="an">style</span><span class="an">="</span><span class="av">overflow: hidden; position: relative; he</span></div><svg style="left:1296.9px;top:1035.3px" width="14.4" height="8.2" viewBox="0 0 14.4 8.2"><path d="M0,0 H14.4 L7.2,8.2 Z" fill="#c4c4c4"/></svg><div class="m" style="left:1314.6px;top:1062.9px;"><span class="av">ight: 401.422px;</span><span class="an">"</span><span class="tg">&gt;</span></div><div class="m" style="left:1339.3px;top:1097.6px;"><span class="tg">&lt;div</span> <span class="an">class</span><span class="an">="</span><span class="av">woocommerce-product-gallery__wrapper</span><span class="an">"</span> <span class="an">style</span><span class="an">="</span><span class="av">width: 800%; tr</span></div><svg style="left:1320.8px;top:1103.7px" width="14.4" height="8.2" viewBox="0 0 14.4 8.2"><path d="M0,0 H14.4 L7.2,8.2 Z" fill="#c4c4c4"/></svg><div class="a" style="left:2071.8px;top:998.8px;width:28.3px;height:20.3px;box-sizing:border-box;border:2.1px solid #1b8ed0;border-radius:10.2px"></div><svg style="left:2077px;top:1006.4px" width="18" height="5" viewBox="0 0 18 5"><g fill="#a8c7fa"><circle cx="2.4" cy="2.5" r="2"/><circle cx="9" cy="2.5" r="2"/><circle cx="15.4" cy="2.5" r="2"/></g></svg><div class="m" style="left:2104.1px;top:994.5px;"><span class="tg">&lt;/a&gt;</span></div><svg style="left:1072px;top:600px" width="21" height="7" viewBox="0 0 21 7"><g fill="#dcdcdc"><circle cx="3" cy="3.4" r="2.6"/><circle cx="10.4" cy="3.4" r="2.6"/><circle cx="17.8" cy="3.4" r="2.6"/></g></svg><div class="a" style="left:1240.2px;top:589.2px;width:1033.5px;height:32.1px;border:2px dotted rgba(175,152,115,.8);box-sizing:border-box"></div><div class="a" style="left:1240.2px;top:622.2px;width:267.6px;height:31.7px;border:2px dotted rgba(175,152,115,.8);box-sizing:border-box"></div><svg style="left:2252px;top:620.5px" width="32" height="31" viewBox="0 0 32 32"><rect x="1.5" y="1.5" width="29" height="29" rx="6" fill="#282828" stroke="#8c8c8c" stroke-width="2"/><path d="M16.5,8 H9 V23.5 H13.2 L16.5,26.8 L19.8,23.5 H24 V17" fill="none" stroke="#e3e3e3" stroke-width="2.1" stroke-linejoin="round"/><path d="M22.5,5 L23.9,8.9 L27.8,10.3 L23.9,11.7 L22.5,15.6 L21.1,11.7 L17.2,10.3 L21.1,8.9 Z" fill="#e3e3e3"/></svg><svg style="left:2298px;top:299px" width="18" height="14" viewBox="0 0 18 14"><path d="M9,1 C10,1 10.6,1.6 11.2,2.4 L17,11 C17.8,12.4 17,13.6 15.6,13.6 H2.4 C1,13.6 .2,12.4 1,11 L6.8,2.4 C7.4,1.6 8,1 9,1 Z" fill="#9e9e9e"/></svg><svg style="left:2298px;top:1107px" width="18" height="14" viewBox="0 0 18 14"><g transform="translate(0 14) scale(1 -1)"><path d="M9,1 C10,1 10.6,1.6 11.2,2.4 L17,11 C17.8,12.4 17,13.6 15.6,13.6 H2.4 C1,13.6 .2,12.4 1,11 L6.8,2.4 C7.4,1.6 8,1 9,1 Z" fill="#9e9e9e"/></g></svg><div class="a" style="left:2298px;top:358px;width:18px;height:65px;border-radius:9px;background:#9e9e9e"></div><div class="a" style="left:1066px;top:1130px;width:1256px;height:2px;background:#5a5a5a"></div><div class="a" style="left:1066px;top:1177px;width:1256px;height:2px;background:#5a5a5a"></div><div class="a" style="left:1066px;top:1132.4px;width:43.8px;height:40.6px;border:2px solid #6a6a6a;background:#282828"></div><svg style="left:1085px;top:1148px" width="10" height="13" viewBox="0 0 10 13"><path d="M9.5,0 V13 L0,6.5 Z" fill="#e3e3e3"/></svg><div class="a" style="left:2024px;top:1132px;width:250px;height:45px;background:#004a77"></div><div class="a" style="left:2275.5px;top:1132.4px;width:43px;height:40.6px;border:2px solid #585858;background:#282828"></div><svg style="left:2294px;top:1148px" width="9" height="12" viewBox="0 0 9 12"><path d="M0,0 V12 L9,6 Z" fill="#757575"/></svg><span class="t" style="transform:scaleX(1.0483);left:1138.5px;top:1141.9px;font:400 23.4px/30px 'Liberation Sans', Arial, sans-serif;color:#e8e8e8;"><span style="color:#7cacf8">div</span><span style="color:#e8e8e8">#content</span><span style="color:#fbcb2a">.site-content</span></span><span class="t" style="transform:scaleX(1.0701);left:1426.0px;top:1141.9px;font:400 23.4px/30px 'Liberation Sans', Arial, sans-serif;color:#e8e8e8;"><span style="color:#7cacf8">div</span><span style="color:#e8e8e8">#col-full-content</span><span style="color:#fbcb2a">.col-full</span></span><span class="t" style="transform:scaleX(1.0389);left:1742.6px;top:1141.9px;font:400 23.4px/30px 'Liberation Sans', Arial, sans-serif;color:#e8e8e8;"><span style="color:#7cacf8">div</span><span style="color:#e8e8e8">#primary</span><span style="color:#fbcb2a">.content-area</span></span><span class="t" style="transform:scaleX(1.0287);left:2038.7px;top:1141.9px;font:400 23.4px/30px 'Liberation Sans', Arial, sans-serif;color:#e8e8e8;"><span style="color:#7cacf8">main</span><span style="color:#e8e8e8">#main</span><span style="color:#fbcb2a">.site-main</span></span><div class="a" style="left:1066px;top:1179px;width:1256px;height:54px;background:#3c3c3c"></div><div class="a" style="left:1066px;top:1233px;width:1256px;height:2px;background:#5a5a5a"></div><span class="t" style="transform:scaleX(0.9686);left:1086.3px;top:1195.4px;font:400 23.4px/30px 'Liberation Sans', Arial, sans-serif;color:#a8c7fa;-webkit-text-stroke:.7px #a8c7fa;">Styles</span><span class="t" style="transform:scaleX(1.0489);left:1190.8px;top:1195.4px;font:400 23.4px/30px 'Liberation Sans', Arial, sans-serif;color:#c7c7c7;-webkit-text-stroke:.7px #c7c7c7;">Computed</span><span class="t" style="transform:scaleX(1.0280);left:1346.8px;top:1195.4px;font:400 23.4px/30px 'Liberation Sans', Arial, sans-serif;color:#c7c7c7;-webkit-text-stroke:.7px #c7c7c7;">Layout</span><span class="t" style="left:1460.8px;top:1195.4px;font:400 23.4px/30px 'Liberation Sans', Arial, sans-serif;color:#c7c7c7;-webkit-text-stroke:.7px #c7c7c7;">Event Listeners</span><span class="t" style="transform:scaleX(1.0477);left:1664.0px;top:1195.4px;font:400 23.4px/30px 'Liberation Sans', Arial, sans-serif;color:#c7c7c7;-webkit-text-stroke:.7px #c7c7c7;">DOM Breakpoints</span><span class="t" style="transform:scaleX(1.0412);left:1898.7px;top:1195.4px;font:400 23.4px/30px 'Liberation Sans', Arial, sans-serif;color:#c7c7c7;-webkit-text-stroke:.7px #c7c7c7;">Properties</span><span class="t" style="transform:scaleX(1.0370);left:2050.5px;top:1195.4px;font:400 23.4px/30px 'Liberation Sans', Arial, sans-serif;color:#c7c7c7;-webkit-text-stroke:.7px #c7c7c7;">Accessibility</span><div class="a" style="left:1066px;top:1229.5px;width:104px;height:5.5px;border-radius:0 6px 0 0;background:#a8c7fa"></div><div class="a" style="left:2292px;top:1235px;width:30px;height:209px;background:#2b2b2b"></div><div class="a" style="left:1076px;top:1239.9px;width:922px;height:40px;border-radius:20px;background:#3c3c3c"></div><svg style="left:1097px;top:1249px" width="22" height="22" viewBox="0 0 22 22"><path d="M2.6,2.6 H19.6 L12.3,11.6 V20.4 H9.9 V11.6 Z" fill="none" stroke="#c7c7c7" stroke-width="2.3" stroke-linejoin="round"/></svg><span class="t" style="transform:scaleX(0.9811);left:1133.0px;top:1246.6px;font:400 23.4px/30px 'Liberation Sans', Arial, sans-serif;color:#c7c7c7;">Filter</span><span class="t" style="transform:scaleX(0.8740);left:2011.0px;top:1245.2px;font:700 22px/29px 'Liberation Sans', Arial, sans-serif;color:#c7c7c7;">:hov</span><span class="t" style="transform:scaleX(1.0299);left:2069.2px;top:1245.2px;font:700 22px/29px 'Liberation Sans', Arial, sans-serif;color:#c7c7c7;">.cls</span><svg style="left:2130px;top:1246px" width="36" height="33" viewBox="0 0 36 33"><path d="M1.9,14.1 H26 M14,2 V26.3" stroke="#c7c7c7" stroke-width="3.3" fill="none"/><path d="M34.8,21.3 V31.5 H24 Z" fill="#c7c7c7"/></svg><svg style="left:2187px;top:1245px" width="26" height="32" viewBox="0 0 26 32"><g fill="none" stroke="#c7c7c7" stroke-width="3"><path d="M2.6,20.2 V5 Q2.6,2.3 5.3,2.3 H23.6 V20.2 Z" stroke-linejoin="round"/><path d="M2.6,16.1 H23.6" stroke-width="3.2"/><path d="M13,5.5 H19.5 V9.8 M16.2,5.5 V9" stroke-width="2.2"/></g><path d="M8.8,20 H17.3 V28.8 Q17.3,31.5 14.6,31.5 H11.5 Q8.8,31.5 8.8,28.8 Z" fill="#c7c7c7"/></svg><svg style="left:2239px;top:1245px" width="30" height="30" viewBox="0 0 30 30"><g fill="none" stroke="#c7c7c7" stroke-width="3.2"><rect x="2.8" y="2.8" width="24.5" height="24.5" rx="2"/><path d="M19.2,2.8 V27.3"/></g><path d="M14.3,8.6 V21.7 L7.1,15.2 Z" fill="#c7c7c7"/></svg><div class="a" style="left:1066px;top:1286.3px;width:1226px;height:2px;background:#5a5a5a"></div><div class="a" style="left:1066px;top:1360.5px;width:1226px;height:2px;background:#5a5a5a"></div><svg style="left:2298px;top:1243px" width="18" height="14" viewBox="0 0 18 14"><path d="M9,1 C10,1 10.6,1.6 11.2,2.4 L17,11 C17.8,12.4 17,13.6 15.6,13.6 H2.4 C1,13.6 .2,12.4 1,11 L6.8,2.4 C7.4,1.6 8,1 9,1 Z" fill="#9e9e9e"/></svg><svg style="left:2298px;top:1423.5px" width="18" height="14" viewBox="0 0 18 14"><g transform="translate(0 14) scale(1 -1)"><path d="M9,1 C10,1 10.6,1.6 11.2,2.4 L17,11 C17.8,12.4 17,13.6 15.6,13.6 H2.4 C1,13.6 .2,12.4 1,11 L6.8,2.4 C7.4,1.6 8,1 9,1 Z" fill="#9e9e9e"/></g></svg><div class="a" style="left:2298px;top:1270px;width:18px;height:33px;border-radius:9px;background:#9e9e9e"></div><div class="m" style="left:1074.0px;top:1293.4px;"><span style="color:#9a9a9a">element.style</span><span style="color:#e3e3e3"> {</span></div><div class="m" style="left:1074.8px;top:1325.5px;"><span style="color:#e3e3e3">}</span></div><div class="m" style="left:1074.1px;top:1368.2px;"><span style="color:#e8e8e8">.site-main {</span></div><div class="m" style="left:1110.0px;top:1400.1px;"><span style="color:#5cd5fb">margin-bottom</span><span style="color:#e3e3e3">: 2.617924em;</span></div><div class="m" style="left:1074.8px;top:1427.1px;"><span style="color:#e3e3e3">}</span></div><div class="m" style="left:1993.2px;top:1372.1px;"><span style="color:#e3e3e3;text-decoration:underline;text-underline-offset:4px;text-decoration-thickness:1.6px;text-decoration-color:#b4b4b4">style.css?ver=4.5.4:31</span></div></div></div></body></html>
